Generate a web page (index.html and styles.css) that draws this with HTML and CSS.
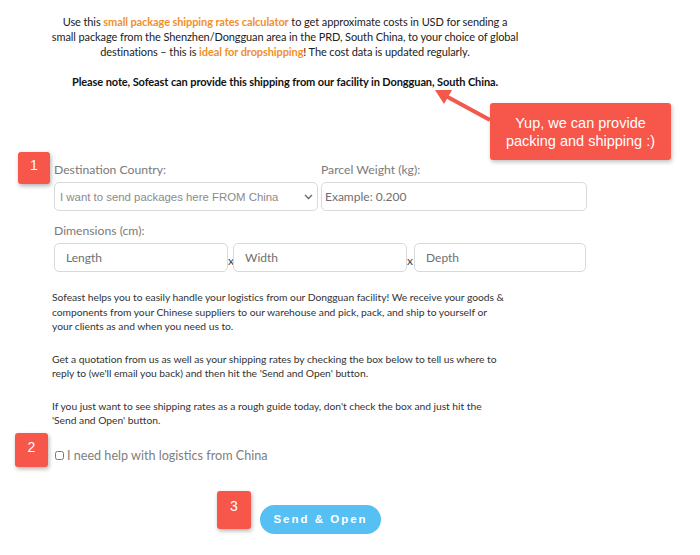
FILE: index.html
```html
<!DOCTYPE html>
<html>
<head>
<meta charset="utf-8">
<link rel="stylesheet" href="styles.css">
</head>
<body>
<div class="page">
  <section class="intro">
    <p class="lead">Use this <strong class="hl">small package shipping rates calculator</strong> to get approximate costs in USD for sending a<br>small package from the Shenzhen/Dongguan area in the PRD, South China, to your choice of global<br>destinations – this is <strong class="hl">ideal for dropshipping</strong>! The cost data is updated regularly.</p>
    <p class="note">Please note, Sofeast can provide this shipping from our facility in Dongguan, South China.</p>
  </section>

  <form class="calc">
    <div class="grid2">
      <div class="field">
        <label class="lbl">Destination Country:</label>
        <div class="selwrap">
          <select class="ctl sel"><option>I want to send packages here FROM China</option></select>
          <svg class="chev" width="9" height="6" viewBox="0 0 9 6"><path d="M1 1 L4.5 4.5 L8 1" fill="none" stroke="#666" stroke-width="1.3"/></svg>
        </div>
      </div>
      <div class="field">
        <label class="lbl">Parcel Weight (kg):</label>
        <input class="ctl wt" placeholder="Example: 0.200">
      </div>
    </div>
    <div class="field dims-field">
      <label class="lbl">Dimensions (cm):</label>
      <div class="dims">
        <input class="ctl dim" placeholder="Length"><span class="x">x</span><input class="ctl dim" placeholder="Width"><span class="x x2">x</span><input class="ctl dim" placeholder="Depth">
      </div>
    </div>

    <div class="copy">
      <p>Sofeast helps you to easily handle your logistics from our Dongguan facility! We receive your goods &amp;<br>components from your Chinese suppliers to our warehouse and pick, pack, and ship to yourself or<br>your clients as and when you need us to.</p>
      <p>Get a quotation from us as well as your shipping rates by checking the box below to tell us where to<br>reply to (we'll email you back) and then hit the 'Send and Open' button.</p>
      <p>If you just want to see shipping rates as a rough guide today, don't check the box and just hit the<br>'Send and Open' button.</p>
    </div>

    <label class="check"><input type="checkbox" class="cb"><span>I need help with logistics from China</span></label>

    <div class="actions">
      <button type="button" class="btn">Send &amp; Open</button>
    </div>
  </form>

  <div class="badge b1">1</div>
  <div class="badge b2">2</div>
  <div class="badge b3">3</div>

  <div class="callout">Yup, we can provide<br>packing and shipping :)</div>
  <svg class="arrow" width="70" height="50" viewBox="0 0 70 50">
    <line x1="58" y1="34" x2="12" y2="9" stroke="#f3584a" stroke-width="4"/>
    <polygon points="3,4 20,4 12,18" fill="#f3584a"/>
  </svg>
</div>
</body>
</html>
```
FILE: styles.css
```css
* { box-sizing: border-box; }
html, body { margin: 0; padding: 0; background: #fff; }
body {
  font-family: Lato, "Liberation Sans", sans-serif;
  color: #333;
  width: 700px;
  height: 555px;
  overflow: hidden;
}
.page { position: relative; width: 700px; height: 555px; }

.intro { width: 570px; text-align: center; padding-top: 14px; }
.intro p { margin: 0; font-size: 11px; letter-spacing: -0.1px; line-height: 15px; white-space: nowrap; color: #222; }
.hl { color: #f0902b; font-weight: 700; }
.note { margin-top: 15px !important; font-weight: 700; color: #111 !important; }

.calc { margin: 73px 0 0 54px; width: 533px; }
.grid2 { display: grid; grid-template-columns: 264px 266px; column-gap: 3px; }
.field { display: flex; flex-direction: column; }
.lbl { font-size: 12.2px; color: #7a7a7a; line-height: 15px; margin-bottom: 5px; }
.ctl {
  height: 29px; border: 1px solid #d9d9d9; border-radius: 5px;
  font-family: inherit; font-size: 12px; color: #555; background: #fff;
  padding: 0 6px; outline: none;
}
.ctl::placeholder { color: #6f6f6f; }
.selwrap { position: relative; }
.sel { width: 100%; height: 29px; appearance: none; -webkit-appearance: none; color: #8a8a8a; font-family: "Liberation Sans", Arial, sans-serif; font-size: 11.4px; padding-left: 5px; }
.chev { position: absolute; right: 5px; top: 12px; }
.wt { width: 100%; padding-left: 3px; }

.dims-field { margin-top: 12px; }
.dims { display: flex; align-items: center; width: 533px; }
.dim { width: 174px; padding-left: 11px; font-size: 12px; }
.dim:last-child { width: 172px; }
.x { width: 5px; font-size: 12px; color: #444; line-height: 10px; padding-top: 6px; }
.x2 { width: 7px; }

.copy { margin: 18px 0 0 -2px; width: 480px; }
.copy p { margin: 0 0 18px; font-size: 10.3px; letter-spacing: -0.03px; line-height: 14.5px; color: #333; white-space: nowrap; }

.check { display: flex; align-items: center; margin-top: 20px; font-size: 12.6px; color: #808080; height: 16px; }
.cb { width: 9px; height: 9px; margin: 0 3px 0 1px; }

.actions { margin: 41px 0 0 206px; }
.btn {
  width: 121px; height: 29px; border: none; border-radius: 15px;
  background: #56c0f4; color: #fff; font-family: "Liberation Sans", Arial, sans-serif;
  font-weight: 700; font-size: 11.5px; letter-spacing: 2px; padding: 0;
}

.badge {
  position: absolute; width: 33px; height: 33px; background: #f7564a; color: #fff;
  border-radius: 3px; box-shadow: 1px 2px 4px rgba(0,0,0,0.3);
  font-family: "Liberation Sans", Arial, sans-serif; font-size: 14px;
  display: flex; align-items: center; justify-content: center; padding-bottom: 6px;
}
.b1 { left: 18px; top: 152px; width: 32px; height: 32px; }
.b2 { left: 15px; top: 433px; height: 34px; }
.b3 { left: 217px; top: 491px; width: 34px; height: 38px; padding-bottom: 8px; }

.callout {
  position: absolute; left: 490px; top: 103px; width: 181px; height: 57px;
  background: #f7564a; color: #fff; border-radius: 3px;
  box-shadow: 1px 2px 4px rgba(0,0,0,0.25);
  font-family: "Liberation Sans", Arial, sans-serif; font-size: 14.5px; line-height: 18px;
  text-align: center; padding-top: 11px;
}
.arrow { position: absolute; left: 432px; top: 86px; }
```
